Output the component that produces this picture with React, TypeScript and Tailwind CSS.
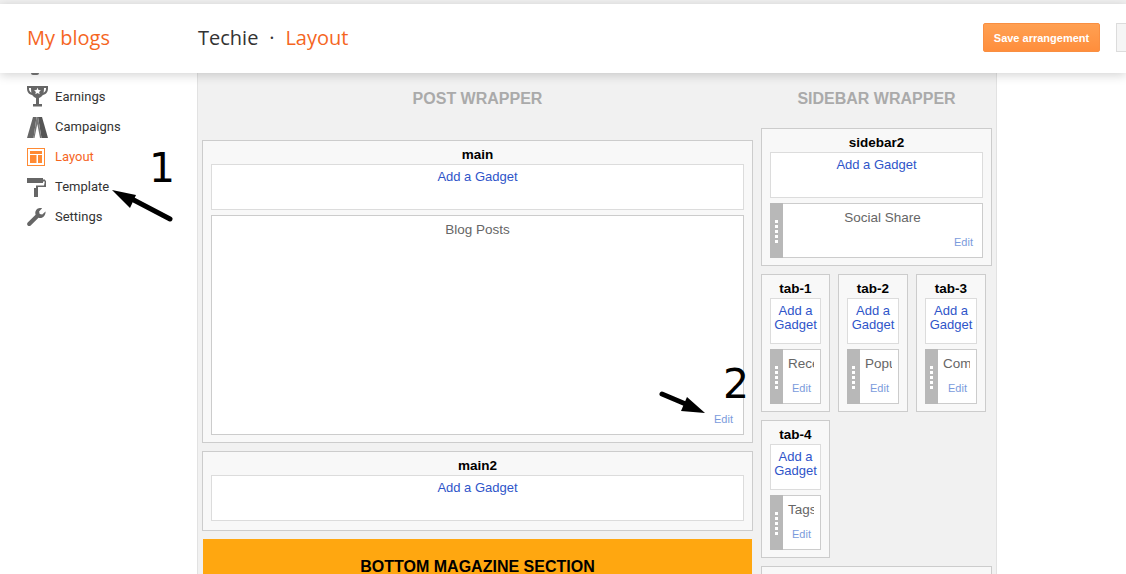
import React from "react";

const arial = "font-['Liberation_Sans',Arial,sans-serif]";

function TrophyIcon() {
  return (
    <svg width="21" height="22" viewBox="0 0 21 22" fill="#666">
      <path d="M0 0h21v2.500c0 3.600-2.200 6-5.200 6.600-.9 1.400-2.200 2.400-3.800 2.800V18h3v2.500H6V18h3v-6.100c-1.600-.4-2.900-1.400-3.800-2.800C2.200 8.500 0 6.100 0 2.500V0zm2 2v.6c0 2 .9 3.500 2.500 4.200C4.200 5.700 4 4.300 4 2H2zm17 0h-2c0 2.300-.2 3.700-.5 4.800C18.100 6.100 19 4.600 19 2.600V2z" />
      <path d="M10.500 1.800l1 2.300 2.400.2-1.800 1.600.6 2.400-2.200-1.300-2.200 1.300.6-2.400-1.800-1.600 2.400-.2z" fill="#fff" />
    </svg>
  );
}

function CampaignsIcon() {
  return (
    <svg width="21" height="21" viewBox="0 0 21 21">
      <path d="M6 0h3.500L6.500 21H0z" fill="#666" />
      <path d="M11 0h4l6 21h-6.500z" fill="#555" />
      <path d="M9.500 0H11l3.500 21h-1.500L10.300 7 7.500 21H6.500z" fill="#777" />
    </svg>
  );
}

function LayoutIcon() {
  return (
    <svg width="18" height="18" viewBox="0 0 18 18">
      <rect x="0.500" y="0.500" width="17" height="17" fill="#fff" stroke="#ff8a33" />
      <rect x="3" y="3" width="12" height="3" fill="#ff8a33" />
      <rect x="3" y="7" width="6.500" height="8" fill="#ff8a33" />
      <rect x="11" y="7" width="4" height="8" fill="#ff8a33" />
    </svg>
  );
}

function RollerIcon() {
  return (
    <svg width="19" height="19" viewBox="0 0 19 19" fill="#666">
      <rect x="0" y="0" width="16" height="5" />
      <rect x="16" y="1.500" width="2" height="2" />
      <path d="M18 2.500h1V9h-8v2H9V7.500h8z" />
      <rect x="7" y="10" width="4" height="9" />
    </svg>
  );
}

function WrenchIcon() {
  return (
    <svg width="19" height="19" viewBox="0 0 19 19" fill="#666">
      <path d="M18.500 3.500l-3.300 3-2.500-.6-.6-2.500 3-3.200c-2.200-.6-4.400 0-5.700 1.600-1.200 1.400-1.400 3.200-.8 4.900L.7 14.500c-.8.800-.8 2.200 0 3s2.200.8 3 0l7.800-7.800c1.700.6 3.600.3 5-1 1.600-1.400 2.300-3.500 2-5.700z" />
    </svg>
  );
}

function NavItem({ icon, label, active }: { icon: React.ReactNode; label: string; active?: boolean }) {
  return (
    <div className="flex h-[30px] items-center">
      <div className="flex w-[29px] shrink-0 items-center pl-px">{icon}</div>
      <span className={`font-['Roboto',sans-serif] text-[13px] ${active ? "text-[#f5661f]" : "text-[#333]"}`}>{label}</span>
    </div>
  );
}

function Grip() {
  return (
    <div className="-my-px -ml-px flex w-[13px] shrink-0 flex-col items-center justify-center gap-[2px] bg-[#b8b8b8] pt-px">
      <i className="h-[3px] w-[3px] bg-white" />
      <i className="h-[3px] w-[3px] bg-white" />
      <i className="h-[3px] w-[3px] bg-white" />
      <i className="h-[3px] w-[3px] bg-white" />
      <i className="h-[3px] w-[3px] bg-white" />
    </div>
  );
}

function AddGadget() {
  return (
    <div className="h-[46px] border border-[#dcdcdc] bg-white pt-[5px] text-center text-[13px] leading-[14px] text-[#2f55c9]">
      Add a Gadget
    </div>
  );
}

function Gadget({ title, narrow }: { title: string; narrow?: boolean }) {
  return (
    <div className="mt-[5px] flex h-[55px] border border-[#ccc] bg-white">
      <Grip />
      <div className="flex min-w-0 flex-1 flex-col overflow-hidden">
        <div className={`h-[29px] overflow-hidden whitespace-nowrap pt-[6px] text-[13.500px] leading-[16px] text-[#666] ${narrow ? "mr-[6px] pl-[5px]" : "text-center"}`}>
          {title}
        </div>
        <div className="-mt-px pr-[9px] text-right text-[11px] leading-[20px] text-[#7b9bdc]">Edit</div>
      </div>
    </div>
  );
}

function Section({ title, className, children }: { title: string; className?: string; children: React.ReactNode }) {
  return (
    <div className={`border border-[#ccc] bg-[#f8f8f8] px-[8px] pb-[7px] ${className ?? ""}`}>
      <div className="h-[23px] pt-[4px] text-center text-[13.500px] font-bold leading-[19px] text-black">{title}</div>
      {children}
    </div>
  );
}

function TabSection({ title, gadget, className }: { title: string; gadget: string; className: string }) {
  return (
    <Section title={title} className={className}>
      <AddGadget />
      <Gadget title={gadget} narrow />
    </Section>
  );
}

export default function App() {
  return (
    <div className={`relative h-[574px] w-[1126px] overflow-hidden bg-white ${arial}`}>
      <div className="h-1 bg-[#f1f1f1]" />

      <header className="relative z-10 flex h-[69px] items-center bg-white pb-[2px] pl-[27px] font-['Open_Sans',sans-serif] text-[20px] shadow-[0_2px_10px_rgba(0,0,0,0.18)]">
        <div className="w-[171px] text-[#f5661f]">My blogs</div>
        <div className="text-[#333]">Techie</div>
        <div className="w-[27px] text-center text-[#333]">·</div>
        <div className="text-[#f5661f]">Layout</div>
        <div className="flex-1" />
        <button className={`h-[29px] w-[117px] rounded-[2px] border border-[#f98f42] bg-gradient-to-b from-[#ffa052] to-[#ff8e3c] pt-px text-[11px] font-bold text-white ${arial}`}>
          Save arrangement
        </button>
        <div className="ml-[16px] h-[29px] w-[10px] border-y border-l border-[#dcdcdc] bg-[#f5f5f5]" />
      </header>

      <div className="flex">
        <nav className="relative h-[501px] w-[197px] shrink-0 pl-[26px] pt-[9px]">
          <div className="absolute left-[31px] top-0 h-[2px] w-[8px] rounded-b bg-[#777]" />
          <NavItem icon={<TrophyIcon />} label="Earnings" />
          <NavItem icon={<CampaignsIcon />} label="Campaigns" />
          <NavItem icon={<LayoutIcon />} label="Layout" active />
          <NavItem icon={<RollerIcon />} label="Template" />
          <NavItem icon={<WrenchIcon />} label="Settings" />
        </nav>

        <main className="flex h-[501px] w-[800px] shrink-0 gap-[8px] border-x border-[#e2e2e2] bg-[#f1f1f1] pl-[4px]">
          <div className="w-[551px] shrink-0">
            <h2 className="h-[67px] pt-[17px] text-center text-[16px] font-bold leading-[18px] text-[#aaa]">POST WRAPPER</h2>
            <Section title="main">
              <AddGadget />
              <div className="mt-[5px] flex h-[220px] flex-col justify-between border border-[#ccc] bg-white pb-[8px] pt-[6px]">
                <div className="text-center text-[13.500px] leading-[16px] text-[#666]">Blog Posts</div>
                <div className="pr-[10px] text-right text-[11px] leading-[14px] text-[#7b9bdc]">Edit</div>
              </div>
            </Section>
            <Section title="main2" className="mt-[8px] pb-[9px]">
              <AddGadget />
            </Section>
            <div className="mx-px mt-[8px] h-[40px] bg-[#ffa710] pt-[19px] text-center text-[16px] font-bold leading-[18px] text-black">
              BOTTOM MAGAZINE SECTION
            </div>
          </div>

          <div className="w-[231px] shrink-0">
            <h2 className="h-[55px] pt-[17px] text-center text-[16px] font-bold leading-[18px] text-[#aaa]">SIDEBAR WRAPPER</h2>
            <Section title="sidebar2">
              <AddGadget />
              <Gadget title="Social Share" />
            </Section>
            <div className="mt-[8px] flex gap-[8px]">
              <TabSection title="tab-1" gadget="Recent Posts" className="w-[69px]" />
              <TabSection title="tab-2" gadget="Popular Posts" className="w-[70px]" />
              <TabSection title="tab-3" gadget="Comments" className="w-[70px]" />
            </div>
            <TabSection title="tab-4" gadget="Tags" className="mt-[8px] w-[69px]" />
            <div className="mt-[8px] h-[40px] border border-[#ccc] bg-[#f8f8f8]" />
          </div>
        </main>
      </div>

      {/* annotations drawn on top of the screenshot */}
      <span className="absolute left-[149px] top-[138px] font-['DejaVu_Sans',sans-serif] text-[41px] leading-[60px] text-black">1</span>
      <span className="absolute left-[723px] top-[354px] font-['DejaVu_Sans',sans-serif] text-[41px] leading-[60px] text-black">2</span>
      <svg className="absolute left-0 top-0" width="1126" height="574" fill="none">
        <path d="M170 219L128 197" stroke="#000" strokeWidth="5" strokeLinecap="round" />
        <path d="M112 190L136 195L130 208z" fill="#000" />
        <path d="M662 394L688 405" stroke="#000" strokeWidth="5" strokeLinecap="round" />
        <path d="M705 413L687 397L681 411z" fill="#000" />
      </svg>
    </div>
  );
}
